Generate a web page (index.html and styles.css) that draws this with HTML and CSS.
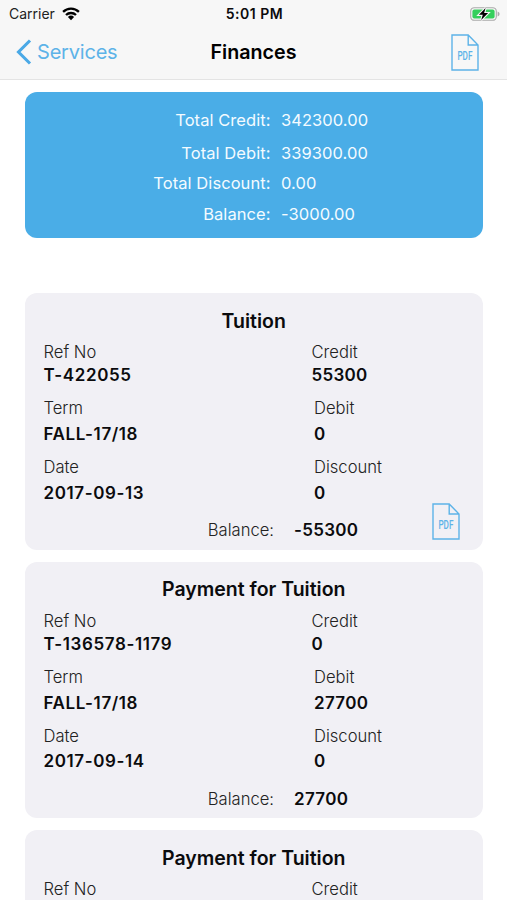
FILE: index.html
```html
<!DOCTYPE html>
<html lang="en">
<head>
    <meta charset="UTF-8">
    <title>Finances</title>
    <link rel="stylesheet" href="styles.css">
</head>
<body>
    <header class="header">
        <div class="status-bar">
            <div class="carrier">
                <span>Carrier</span>
                <svg class="wifi" viewBox="0 0 18 14">
                    <path d="M1.1 4.9A11.3 11.3 0 0 1 16.9 4.9M4 8A7.2 7.2 0 0 1 14 8" fill="none" stroke="#000" stroke-width="2.3"/>
                    <path d="M5.9 10A4.5 4.5 0 0 1 12.1 10L9 13.2Z"/>
                </svg>
            </div>
            <div class="clock">5:01 PM</div>
            <svg class="battery" viewBox="0 0 30 14">
                <rect x=".7" y=".7" width="25.6" height="12.6" rx="3.6" fill="none" stroke="#aaa" stroke-width="1.1"/>
                <path d="M27.6 4.6Q29.6 5.2 29.6 7T27.6 9.4Z" fill="#aaa"/>
                <rect x="2.4" y="2.4" width="22.2" height="9.2" rx="2" fill="#35cf5c"/>
                <path d="M15.6 1L8.9 7.8H12.8L11.2 13L18.1 6.1H14.1Z" stroke="#f7f7f7" stroke-width="2.2" paint-order="stroke"/>
            </svg>
        </div>
        <nav class="nav">
            <div class="back">
                <svg class="chevron" viewBox="0 0 16 26"><path d="M14 1.5L2.5 13L14 24.5" fill="none" stroke="#4aa9e6" stroke-width="3.1"/></svg>
                <span>Services</span>
            </div>
            <h1>Finances</h1>
            <svg class="pdf" viewBox="0 0 28 37">
                <path d="M1 1H17.2L27 11V36H1Z M17.2 1V11H27" fill="none" stroke="#5db3e8" stroke-width="1.4"/>
                <text transform="translate(6.4 26.4) scale(.68 1)">PDF</text>
            </svg>
        </nav>
    </header>

    <main class="content">
        <section class="summary">
            <div class="total first"><span>Total Credit:</span><span>342300.00</span></div>
            <div class="total"><span>Total Debit:</span><span>339300.00</span></div>
            <div class="total"><span>Total Discount:</span><span>0.00</span></div>
            <div class="total"><span>Balance:</span><span>-3000.00</span></div>
        </section>

        <section class="card">
            <h2>Tuition</h2>
            <div class="row top">
                <div class="field"><span>Ref No</span><b>T-422055</b></div>
                <div class="field"><span>Credit</span><b>55300</b></div>
            </div>
            <div class="row">
                <div class="field"><span>Term</span><b>FALL-17/18</b></div>
                <div class="field"><span>Debit</span><b>0</b></div>
            </div>
            <div class="row">
                <div class="field"><span>Date</span><b>2017-09-13</b></div>
                <div class="field"><span>Discount</span><b>0</b></div>
            </div>
            <div class="balance"><span>Balance:</span><b>-55300</b></div>
            <svg class="pdf card-pdf" viewBox="0 0 28 37">
                <path d="M1 1H17.2L27 11V36H1Z M17.2 1V11H27" fill="none" stroke="#5db3e8" stroke-width="1.4"/>
                <text transform="translate(6.4 26.4) scale(.68 1)">PDF</text>
            </svg>
        </section>

        <section class="card">
            <h2>Payment for Tuition</h2>
            <div class="row top">
                <div class="field"><span>Ref No</span><b>T-136578-1179</b></div>
                <div class="field"><span>Credit</span><b>0</b></div>
            </div>
            <div class="row">
                <div class="field"><span>Term</span><b>FALL-17/18</b></div>
                <div class="field"><span>Debit</span><b>27700</b></div>
            </div>
            <div class="row">
                <div class="field"><span>Date</span><b>2017-09-14</b></div>
                <div class="field"><span>Discount</span><b>0</b></div>
            </div>
            <div class="balance"><span>Balance:</span><b>27700</b></div>
        </section>

        <section class="card last">
            <h2>Payment for Tuition</h2>
            <div class="row top">
                <div class="field"><span>Ref No</span></div>
                <div class="field"><span>Credit</span></div>
            </div>
        </section>
    </main>
</body>
</html>
```

FILE: styles.css
```css
* {
    box-sizing: border-box;
}

body {
    margin: 0;
    height: 900px;
    overflow: hidden;
    display: flex;
    flex-direction: column;
    background: #fff;
    color: #0b0b0d;
    font-family: Inter, sans-serif;
    font-size: 16.6px;
}

.header {
    flex: none;
    height: 80px;
    background: #f7f7f7;
    border-bottom: 1.5px solid #e4e4e4;
}

/* status bar */
.status-bar {
    display: grid;
    grid-template-columns: 1fr auto 1fr;
    align-items: center;
    height: 27px;
    padding: 0 7px 0 9px;
    font-size: 14px;
}

.carrier {
    display: flex;
    align-items: center;
    gap: 7px;
    color: #222;
}

.wifi {
    width: 18px;
    height: 14px;
}

.clock {
    font-weight: 600;
    font-size: 14px;
    letter-spacing: 0.5px;
}

.battery {
    justify-self: end;
    width: 30px;
    height: 14px;
}

/* navigation */
.nav {
    display: grid;
    grid-template-columns: 1fr auto 1fr;
    align-items: center;
    height: 50px;
    padding: 0 16px;
}

.back {
    display: flex;
    align-items: center;
    gap: 5px;
    color: #5db3e8;
    font-size: 20px;
    letter-spacing: -0.2px;
}

.chevron {
    width: 16px;
    height: 26px;
}

h1 {
    margin: 0;
    font-size: 19.7px;
    font-weight: 600;
    color: #000;
}

.pdf {
    justify-self: end;
    width: 28px;
    height: 37px;
}

.nav .pdf {
    margin-right: 12px;
}

.pdf text {
    font-family: Roboto, sans-serif;
    font-size: 12px;
    font-weight: 500;
    fill: #5db3e8;
}

.content {
    flex: 1;
    min-height: 0;
    display: flex;
    flex-direction: column;
    padding: 11.5px 24.5px 0 25px;
}

/* totals */
.summary {
    flex: none;
    height: 146px;
    margin-bottom: 55.5px;
    padding-top: 17.5px;
    border-radius: 12px;
    background: #4aade7;
    color: #f4fbff;
    font-size: 16.5px;
    letter-spacing: 0.06px;
}

.total {
    display: grid;
    grid-template-columns: 245.5px 1fr;
    column-gap: 10.5px;
    line-height: 22px;
    margin-bottom: 8.4px;
}

.total.first {
    margin-bottom: 11px;
}

.total span:first-child {
    text-align: right;
}

/* transactions */
.card {
    flex: none;
    position: relative;
    height: 256.5px;
    margin-bottom: 12.2px;
    padding: 15.8px 18.5px 0;
    border-radius: 12px;
    background: #f1f0f5;
}

.card.last {
    flex: 1;
    min-height: 0;
    margin-bottom: 0;
    border-radius: 12px 12px 0 0;
}

h2 {
    margin: 0 0 8.3px;
    text-align: center;
    font-size: 19.5px;
    font-weight: 600;
    line-height: 24px;
}

.row {
    display: grid;
    grid-template-columns: 270.5px 1fr;
    margin-bottom: 11px;
}

.row.top {
    grid-template-columns: 268px 1fr;
    margin-bottom: 11.2px;
}

.field {
    display: flex;
    flex-direction: column;
    gap: 3.6px;
    line-height: 22px;
}

.top .field {
    gap: 1.2px;
}

.field span,
.balance span {
    font-weight: 300;
    color: #222;
}

b {
    font-size: 17px;
    font-weight: 600;
    letter-spacing: 0.3px;
}

.field:first-child b {
    letter-spacing: 0.6px;
}

.balance {
    display: grid;
    grid-template-columns: 230.5px 1fr;
    column-gap: 20px;
    padding-top: 4.3px;
    line-height: 22px;
}

.balance span {
    text-align: right;
}

/* sits over the corner of the card */
.card-pdf {
    position: absolute;
    right: 22.5px;
    bottom: 9.5px;
}
```
